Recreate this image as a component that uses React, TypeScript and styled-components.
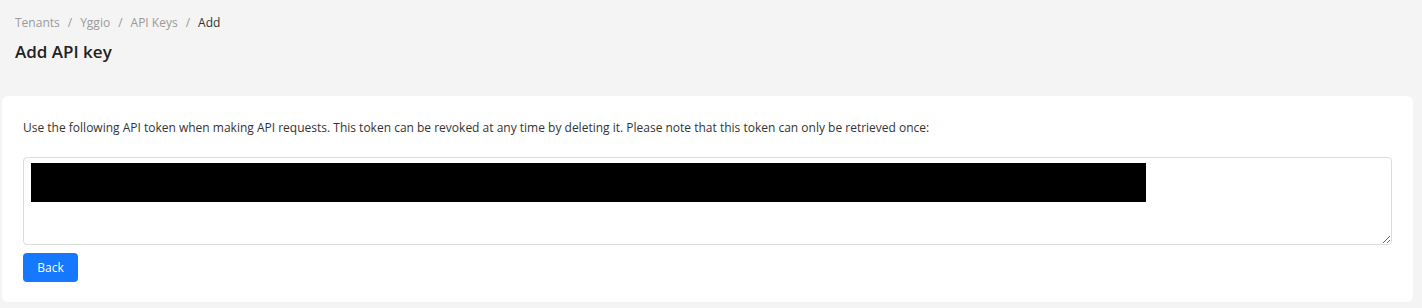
import React from "react";
import styled, { createGlobalStyle } from "styled-components";

const Global = createGlobalStyle`
  html, body { margin: 0; padding: 0; background: #f4f4f4; }
  body { font-family: "Open Sans", "Noto Sans", sans-serif; color: #333; }
  * { box-sizing: border-box; }
`;

const Page = styled.div`
  width: 1422px;
  height: 308px;
  padding: 0 9px 0 2px;
  display: flex;
  flex-direction: column;
`;

const Header = styled.header`
  padding: 14px 13px 0;
  height: 96px;
  display: flex;
  flex-direction: column;
`;

const Crumbs = styled.nav`
  display: flex;
  align-items: center;
  gap: 8px;
  font-size: 12px;
  line-height: 18px;
  color: #999;
`;

const Crumb = styled.span<{ $current?: boolean }>`
  color: ${(p) => (p.$current ? "#333" : "#9a9a9a")};
`;

const Title = styled.h1`
  margin: 8px 0 0;
  font-size: 17px;
  font-weight: 600;
  line-height: 24px;
  color: #222;
`;

const Card = styled.section`
  background: #fff;
  border-radius: 6px;
  padding: 23px 21px 20px;
  display: flex;
  flex-direction: column;
`;

const Text = styled.p`
  margin: 0 0 20px;
  font-size: 12px;
  line-height: 18px;
  color: #333;
`;

const FieldWrap = styled.div`
  position: relative;
  height: 88px;
`;

const TokenArea = styled.textarea`
  width: 100%;
  height: 88px;
  border: 1px solid #dcdcdc;
  border-radius: 4px;
  resize: vertical;
  font-family: inherit;
  font-size: 12px;
  padding: 6px 8px;
  display: block;
`;

const Redaction = styled.div`
  position: absolute;
  left: 8px;
  top: 6px;
  width: 1115px;
  height: 39px;
  background: #000;
`;

const Button = styled.button`
  margin-top: 8px;
  align-self: flex-start;
  width: 55px;
  height: 29px;
  border: none;
  border-radius: 4px;
  background: #1677ff;
  color: #fff;
  font-family: inherit;
  font-size: 12px;
  cursor: pointer;
`;

export default function App() {
  return (
    <Page>
      <Global />
      <Header>
        <Crumbs>
          <Crumb>Tenants</Crumb>
          <Crumb>/</Crumb>
          <Crumb>Yggio</Crumb>
          <Crumb>/</Crumb>
          <Crumb>API Keys</Crumb>
          <Crumb>/</Crumb>
          <Crumb $current>Add</Crumb>
        </Crumbs>
        <Title>Add API key</Title>
      </Header>
      <Card>
        <Text>
          Use the following API token when making API requests. This token can be revoked at any time by deleting it. Please note that this token can only be retrieved once:
        </Text>
        <FieldWrap>
          <TokenArea readOnly defaultValue="" />
          <Redaction />
        </FieldWrap>
        <Button>Back</Button>
      </Card>
    </Page>
  );
}
